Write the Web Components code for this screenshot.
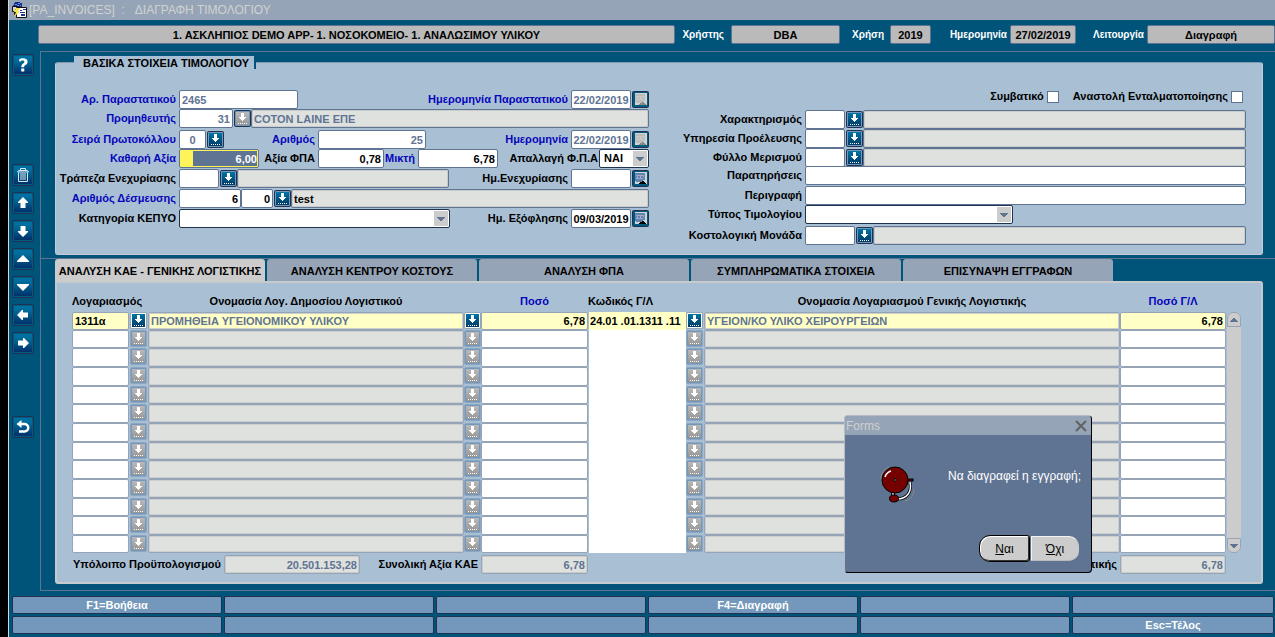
<!DOCTYPE html>
<html lang="el">
<head>
<meta charset="utf-8">
<title>[PA_INVOICES] : ΔΙΑΓΡΑΦΗ ΤΙΜΟΛΟΓΙΟΥ</title>
<style>
:root{
  --teal:#005479; --panel:#a9bfd4; --bar:#96a4b7; --steel:#5f7493; --key:#7398bb;
  --grey:#cccccc; --field-off:#dee1de; --navy:#1f3350; --blue:#0606bb; --current:#ffffc6;
}
body{margin:0;background:var(--teal);font:bold 11px/13px "Liberation Sans",Arial,sans-serif;color:#000}
</style>
</head>
<body>
<invoice-app></invoice-app>
<script>
const base = `<style>*{box-sizing:border-box}button,input,select{font:inherit;margin:0}button{padding:0;cursor:pointer}</style>`;
function define(name, html, setup){
  const t = document.createElement('template');
  t.innerHTML = base + html;
  customElements.define(name, class extends HTMLElement{
    constructor(){
      super();
      this.attachShadow({mode:'open'}).appendChild(t.content.cloneNode(true));
    }
    connectedCallback(){ if(setup && !this.ready){ this.ready = true; setup(this, this.shadowRoot); } }
  });
}

/* Labelled single-line field; the slot takes buttons that follow the input */
define('text-field', `<style>
:host{display:flex;align-items:center;height:19px;min-width:0;flex:none}
:host([grow]){flex:1}
:host([push]){margin-left:auto}
label{width:var(--lw,auto);flex:none;text-align:right;white-space:nowrap;margin-right:3px;color:#000}
label:empty{display:none}
:host([key]) label{color:var(--blue)}
:host([flush]) label{margin-right:0}
input{width:var(--w,60px);height:19px;border:1px solid var(--steel);border-radius:2px;background:#fff;padding:0 2px;color:#000;outline:0;min-width:0}
:host([grow]) input{flex:1}
:host([dim]) input{color:var(--steel)}
:host([off]) input{background:var(--field-off);box-shadow:inset 0 0 0 1px #c9cccb;border-color:var(--edge,var(--steel))}
:host([align=right]) input{text-align:right}
:host([align=center]) input{text-align:center;padding:0}
:host([current]) input{color:#fff;padding:1px 1px 1px 13px;background:linear-gradient(var(--steel),var(--steel)) content-box,#fff35a}
</style><label for="f"></label><input id="f" type="text"><slot></slot>`, (el, r) => {
  r.querySelector('label').textContent = el.getAttribute('label') || '';
  const i = r.querySelector('input');
  i.value = el.getAttribute('value') || '';
  if(!el.hasAttribute('label')) i.setAttribute('aria-label', el.getAttribute('name') || 'Περιγραφή');
  i.readOnly = el.hasAttribute('off');
});

define('status-field', `<style>
:host{display:flex;align-items:center;flex:none;min-width:0}
:host([grow]){flex:1}
label{font-size:10px;color:#fff;text-align:right;white-space:nowrap;width:var(--lw,auto);margin-right:var(--lg,6px)}
label:empty{display:none}
input{width:var(--w,60px);height:19px;min-width:0;border:1px solid var(--steel);border-radius:2px;background:#bababa;text-align:center;padding:0 2px;color:#000}
:host([grow]) input{flex:1}
</style><label for="f"></label><input id="f" type="text" readonly>`, (el, r) => {
  r.querySelector('label').textContent = el.getAttribute('label') || '';
  const i = r.querySelector('input');
  i.value = el.getAttribute('value');
  if(!el.hasAttribute('label')) i.setAttribute('aria-label','Εφαρμογή');
});

define('pick-list', `<style>
:host{display:flex;align-items:center;flex:none}
:host([push]){margin-left:auto}
label{width:var(--lw,auto);text-align:right;white-space:nowrap;margin-right:var(--lg,3px)}
.box{display:grid;width:var(--w,60px);height:19px}
select{grid-area:1/1;width:100%;height:100%;appearance:none;border:1px solid var(--navy);border-radius:2px;background:#fff;padding:0 4px;color:#000}
.arrow{grid-area:1/1;justify-self:end;align-self:center;margin-right:2px;width:14px;height:15px;background:var(--grey);pointer-events:none}
</style><label for="s"></label><div class="box"><select id="s"><option></option></select>
<svg class="arrow" viewBox="0 0 14 15"><path d="M3 6h8v1H3zM4 7h6v1H4zM5 8h4v1H5zM6 9h2v1H6z" fill="#5f7493"/></svg></div>`, (el, r) => {
  r.querySelector('label').textContent = el.getAttribute('label');
  r.querySelector('option').textContent = el.getAttribute('value') || '';
});

define('check-field', `<style>
:host{display:flex;align-items:center;flex:none}
label{margin-right:3px;white-space:nowrap}
input{appearance:none;width:12px;height:12px;border:1px solid var(--steel);background:#fff}
</style><label for="c"></label><input id="c" type="checkbox">`, (el, r) => {
  r.querySelector('label').textContent = el.getAttribute('label');
});

/* List-of-values button */
define('lov-button', `<style>
:host{display:block;width:17px;height:17px;flex:none}
button{display:block;width:17px;height:17px;border:0;background:none}
svg{display:block}
.o{fill:#1f3350}.f{fill:#7398bb}.i{fill:url(#g)}
:host([off]) .i{fill:url(#h)}
:host([grid]) .o{fill:#96a4b7}
:host([grid][on]) .f{fill:#fffff0}
:host([grid]:not([on])) .o{fill:#8ba6c2}
</style><button type="button" aria-label="Λίστα τιμών"><svg width="17" height="17" viewBox="0 0 17 17">
<defs><linearGradient id="g" x2="0" y2="1"><stop offset="0" stop-color="#0074a6"/><stop offset="1" stop-color="#003a66"/></linearGradient>
<linearGradient id="h" x2="0" y2="1"><stop offset="0" stop-color="#b9b9b9"/><stop offset="1" stop-color="#969696"/></linearGradient></defs>
<rect class="o" width="17" height="17" rx="2"/><rect class="f" x="1" y="1" width="15" height="15" rx="1"/><rect class="i" x="2" y="2" width="13" height="13"/>
<path d="M7 3h3v4h2v1h-1v1h-1v1H9v1H8v-1H7V9H6V8H5V7h2zM4 13h1v1H4zM6 13h1v1H6zM8 13h1v1H8zM10 13h1v1h-1zM12 13h1v1h-1z" fill="#fff"/></svg></button>`);

define('date-button', `<style>
:host{display:block;width:17px;height:17px;flex:none;margin-left:1px}
button{display:block;width:17px;height:17px;border:0;background:none}
svg{display:block}
.p{fill:#6382b3}.t{fill:#000}
:host([off]) .p{fill:#bdbdbd}:host([off]) .t{fill:#8b8b86}
</style><button type="button" aria-label="Ημερολόγιο"><svg width="17" height="17" viewBox="0 0 17 17">
<rect width="17" height="17" rx="2" fill="#1f3350"/><rect x="1" y="1" width="15" height="15" fill="#005b80"/><rect x="3" y="2" width="12" height="12" fill="#d2d4d2"/>
<path class="p" d="M3 3h10v7h-2v2H4v-1H3z"/><path d="M4 5h8v1H4zM4 8h7v1H4zM5 5h1v4H5zM8 5h1v4H8zM11 5h1v2h-1z" fill="#d2d4d2" opacity=".55"/>
<path class="t" d="M10 11h2v1h1v1h1v1H7v-1h1v-1h2z"/></svg></button>`);

define('tool-button', `<style>
:host{display:block;width:22px;height:22px}
button{display:block;width:22px;height:22px;border:1px solid var(--navy);border-radius:2px;background:#005b85;padding:1px}
svg{display:block;width:18px;height:18px;background:linear-gradient(#0070a0 0 15%,#005a8a 50%,#00306a)}
</style><button type="button"><svg viewBox="0 0 18 18" fill="#fff"></svg></button>`, (el, r) => {
  const icons = {
    help:['Βοήθεια','<path d="M5 3.5C6 2.7 7.3 2.3 9 2.3c2.900 0 4.600 1.300 4.600 3.400 0 1.600-.8 2.500-2.100 3.300-1 .6-1.300 1-1.300 2.200H7.300c0-2 .5-2.800 1.800-3.700 1-.6 1.300-1 1.300-1.700 0-.8-.6-1.200-1.600-1.200-1.100 0-2 .4-3.100 1.300zM7.200 12.600h3.100v3H7.200z"/>'],
    trash:['Διαγραφή','<path d="M4.500 4.500h9l1 1.500h-11zM6.500 4V2.500h5V4M4.500 6.500v9h9v-9M7 7v7M9 7v7M11 7v7" fill="none" stroke="#dce6f0"/>'],
    up:['Προηγούμενη εγγραφή','<path d="M9 3l5 5v1h-2.500v5h-5V9H4V8z"/>'],
    down:['Επόμενη εγγραφή','<path d="M9 15l5-5V9h-2.500V4h-5v5H4v1z"/>'],
    pageup:['Προηγούμενη σελίδα','<path d="M9 5l6 6v1H3v-1z"/>'],
    pagedown:['Επόμενη σελίδα','<path d="M9 13L3 7V6h12v1z"/>'],
    left:['Αριστερά','<path d="M3 9l5-5h1v2.500h5v5H9V14H8z"/>'],
    right:['Δεξιά','<path d="M15 9l-5-5H9v2.500H4v5h5V14h1z"/>'],
    back:['Επιστροφή','<path d="M5 6h5.500a3.500 3.500 0 0 1 0 7.500H5" fill="none" stroke="#fff" stroke-width="2.500"/><path d="M7.500 2v8L2.500 6z"/>']
  };
  const [n, p] = icons[el.getAttribute('icon')];
  r.querySelector('svg').innerHTML = p;
  r.querySelector('button').setAttribute('aria-label', n);
});

define('tool-rail', `<style>
:host{display:flex;flex-direction:column;width:31px;flex:none;padding:3px 0 0 3px}
nav{display:flex;flex-direction:column;gap:6px}
.edit{margin-top:88px}.exit{margin-top:62px}
</style>
<nav><tool-button icon="help"></tool-button></nav>
<nav class="edit"><tool-button icon="trash"></tool-button><tool-button icon="up"></tool-button><tool-button icon="down"></tool-button><tool-button icon="pageup"></tool-button><tool-button icon="pagedown"></tool-button><tool-button icon="left"></tool-button><tool-button icon="right"></tool-button></nav>
<nav class="exit"><tool-button icon="back"></tool-button></nav>`);

define('title-bar', `<style>
:host{display:flex;align-items:center;height:20px;background:var(--bar);font-weight:normal;font-size:12px;line-height:20px;color:#d0d2d0;padding-left:2px;gap:2px;white-space:pre}
svg{flex:none}
</style><svg width="16" height="16" viewBox="0 0 16 16"><path d="M3 1h1V0h5v1h2v4H2V3h1z" fill="#1c2a86"/><path d="M4 2h2v1H4zM7 1h2v1H7zM6 3h2v1H6zM9 3h1v1H9z" fill="#4ea0ff"/><path d="M1.500 4.500h6v3h-3v5h-1v-3h-2z" fill="#d8d8d8" stroke="#111"/><path d="M5.500 5.500h10v10h-10z" fill="#fff" stroke="#111"/><path d="M9 8h2v1H9zM12 7h3v1h-3zM9 10h5v1H9zM10 12h4v2h-4z" fill="#26338f"/><path d="M5 6h4L7 9h2l-6 6 2-5H3z" fill="#f5e642"/></svg><span>[PA_INVOICES]  :   ΔΙΑΓΡΑΦΗ ΤΙΜΟΛΟΓΙΟΥ</span>`);

define('status-header', `<style>
:host{display:flex;padding:5px 0 7px 29px}
.u{--lw:49px;--lg:7px;--w:109px}.y{--lw:44px;--w:41px}.d{--lw:76px;--lg:3px;--w:66px}.m{--lw:68px;--lg:3px;--w:128px}
</style>
<status-field grow value="1. ΑΣΚΛΗΠΙΟΣ DEMO APP- 1. ΝΟΣΟΚΟΜΕΙΟ- 1. ΑΝΑΛΩΣΙΜΟΥ ΥΛΙΚΟΥ"></status-field>
<status-field class="u" label="Χρήστης" value="DBA"></status-field>
<status-field class="y" label="Χρήση" value="2019"></status-field>
<status-field class="d" label="Ημερομηνία" value="27/02/2019"></status-field>
<status-field class="m" label="Λειτουργία" value="Διαγραφή"></status-field>`);

define('invoice-form', `<style>
:host{display:block;border:1px solid #c2cdd8;border-top-color:#8299b2;border-radius:3px;background:var(--panel);height:193px}
h2{font:inherit;line-height:15px;width:max-content;height:13px;margin:-7px 0 21px 18px;padding:0 5px 0 9px;background:var(--panel);border-right:2px solid var(--teal)}
.cols{display:flex}
.left{flex:none;width:593px;display:grid;grid-template-rows:19px 21px 19px 20px 20px 20px 20px}
.right{flex:1;min-width:0;padding-right:16px;display:grid;grid-template-rows:20px 19px 19px 18px 20px 19px 21px 19px}
.row{display:flex;align-items:flex-start;min-width:0}
.left .row>:first-child{--lw:120px}
.right .row>:first-child{--lw:153px}
.row>lov-button{margin:1px 0 0 1px}
.checks{justify-content:flex-end;gap:14px;padding:0 3px 0 0}
.w27{--w:27px}.w32{--w:32px}.w40{--w:40px}.w50{--w:50px}.w54{--w:54px}.w60{--w:60px}.w62{--w:62px}.w66{--w:66px;--lw:56px}.w80{--w:80px}.w119{--w:119px}.num{--w:108px;--lw:91px}.mix{--w:80px;--lw:31px}.bank{width:212px}.kepyo{--w:271px}.vat{--w:50px;--lg:1px}.kind{--w:208px}
</style>
<h2>ΒΑΣΙΚΑ ΣΤΟΙΧΕΙΑ ΤΙΜΟΛΟΓΙΟΥ</h2>
<div class="cols">
<div class="left">
 <div class="row"><text-field key dim class="w119" label="Αρ. Παραστατικού" value="2465"></text-field><text-field push key dim align="center" class="w60" label="Ημερομηνία Παραστατικού" value="22/02/2019"><date-button off></date-button></text-field></div>
 <div class="row"><text-field key dim align="right" class="w54" label="Προμηθευτής" value="31"></text-field><lov-button off></lov-button><text-field grow off dim name="Επωνυμία" value="COTON LAINE ΕΠΕ"></text-field></div>
 <div class="row"><text-field key dim align="center" class="w27" label="Σειρά Πρωτοκόλλου" value="0"></text-field><lov-button></lov-button><text-field key dim align="right" class="num" label="Αριθμός" value="25"></text-field><text-field push key dim align="center" class="w60" label="Ημερομηνία" value="22/02/2019"><date-button off></date-button></text-field></div>
 <div class="row"><text-field key current align="right" class="w80" label="Καθαρή Αξία" value="6,00"></text-field><text-field align="right" class="w66" label="Αξία ΦΠΑ" value="0,78"></text-field><text-field key align="right" class="mix" label="Μικτή" value="6,78"></text-field><pick-list push class="vat" label="Απαλλαγή Φ.Π.Α" value="ΝΑΙ"></pick-list></div>
 <div class="row"><text-field class="w40" label="Τράπεζα Ενεχυρίασης"></text-field><lov-button></lov-button><div class="row bank"><text-field grow off name="Τράπεζα"></text-field></div><text-field push class="w60" label="Ημ.Ενεχυρίασης"><date-button></date-button></text-field></div>
 <div class="row"><text-field key align="right" class="w62" label="Αριθμός Δέσμευσης" value="6"></text-field><text-field align="right" class="w32" name="Έτος" value="0"></text-field><lov-button></lov-button><text-field grow off name="Δέσμευση" value="test"></text-field></div>
 <div class="row"><pick-list class="kepyo" label="Κατηγορία ΚΕΠΥΟ"></pick-list><text-field push align="center" class="w60" label="Ημ. Εξόφλησης" value="09/03/2019"><date-button></date-button></text-field></div>
</div>
<div class="right">
 <div class="row checks"><check-field label="Συμβατικό"></check-field><check-field label="Αναστολή Ενταλματοποίησης"></check-field></div>
 <div class="row"><text-field class="w40" label="Χαρακτηρισμός"></text-field><lov-button></lov-button><text-field grow off></text-field></div>
 <div class="row"><text-field class="w40" label="Υπηρεσία Προέλευσης"></text-field><lov-button></lov-button><text-field grow off></text-field></div>
 <div class="row"><text-field class="w40" label="Φύλλο Μερισμού"></text-field><lov-button></lov-button><text-field grow off></text-field></div>
 <div class="row"><text-field grow label="Παρατηρήσεις"></text-field></div>
 <div class="row"><text-field grow label="Περιγραφή"></text-field></div>
 <div class="row"><pick-list class="kind" label="Τύπος Τιμολογίου"></pick-list></div>
 <div class="row"><text-field class="w50" label="Κοστολογική Μονάδα"></text-field><lov-button></lov-button><text-field grow off></text-field></div>
</div>
</div>`);

define('tab-strip', `<style>
:host{display:flex;gap:2px;height:22px}
button{width:210px;height:22px;border:0;border-radius:3px 3px 0 0;background:var(--bar);font-weight:bold;line-height:20px;padding-top:2px;color:#000;white-space:nowrap}
button[aria-selected=true]{background:var(--grey)}
</style><div role="tablist" style="display:contents">
<button role="tab" aria-selected="true">ΑΝΑΛΥΣΗ ΚΑΕ - ΓΕΝΙΚΗΣ ΛΟΓΙΣΤΙΚΗΣ</button><button role="tab">ΑΝΑΛΥΣΗ ΚΕΝΤΡΟΥ ΚΟΣΤΟΥΣ</button><button role="tab">ΑΝΑΛΥΣΗ ΦΠΑ</button><button role="tab">ΣΥΜΠΛΗΡΩΜΑΤΙΚΑ ΣΤΟΙΧΕΙΑ</button><button role="tab">ΕΠΙΣΥΝΑΨΗ ΕΓΓΡΑΦΩΝ</button></div>`);

define('account-table', `<style>
:host{display:block;min-width:0;flex:1}
table{width:100%;table-layout:fixed;border-collapse:separate;border-spacing:0}
th,td{padding:0;text-align:center;vertical-align:top;white-space:nowrap}
th{height:21px;padding-top:4px;font:inherit;line-height:13px}
th.l{text-align:left}th.k{color:var(--blue)}
tbody tr{--h:19px}
tbody tr:nth-child(3n+2),tbody tr:first-child,tbody tr:last-child{--h:18px}
td{height:var(--h)}
input{display:block;width:100%;height:var(--h);border:1px solid var(--bar);border-radius:2px;background:#fff;padding:0 2px;outline:0;color:#000}
.acc{width:57px}.nm{background:var(--field-off);box-shadow:inset 0 0 0 1px #cdcfce;color:var(--steel)}
.amt{text-align:right}
.code{width:97px;margin:0 0 0 1px;border:0;border-radius:0;padding:0 1px}
lov-button{height:var(--h);overflow:hidden}
tbody tr:first-child input{background:var(--current)}
</style><table><colgroup><col style="width:58px"><col style="width:18px"><col style="width:316px"><col style="width:17px"><col style="width:107px"><col style="width:98px"><col style="width:18px"><col><col style="width:106px"></colgroup>
<thead><tr><th class="l" colspan="2">Λογαριασμός</th><th>Ονομασία Λογ. Δημοσίου Λογιστικού</th><th></th><th class="k">Ποσό</th><th class="l">Κωδικός Γ/Λ</th><th></th><th>Ονομασία Λογαριασμού Γενικής Λογιστικής</th><th class="k">Ποσό Γ/Λ</th></tr></thead><tbody></tbody></table>`, (el, r) => {
  const first = ['1311α','ΠΡΟΜΗΘΕΙΑ ΥΓΕΙΟΝΟΜΙΚΟΥ ΥΛΙΚΟΥ','6,78','24.01 .01.1311 .11','ΥΓΕΙΟΝ/ΚΟ ΥΛΙΚΟ ΧΕΙΡΟΥΡΓΕΙΩΝ','6,78'];
  const names = ['Λογαριασμός','Ονομασία','Ποσό','Κωδικός Γ/Λ','Ονομασία Γ/Λ','Ποσό Γ/Λ'];
  const kinds = ['acc','nm','amt','code','nm','amt'];
  let out = '';
  for(let n = 0; n < 13; n++){
    const v = n ? ['','','','','',''] : first;
    const cell = c => `<td><input type="text" class="${kinds[c]}" aria-label="${names[c]} ${n + 1}" value="${v[c]}"${kinds[c] === 'nm' ? ' readonly' : ''}></td>`;
    const lov = `<td><lov-button grid ${n ? 'off' : 'on'}></lov-button></td>`;
    out += '<tr>' + cell(0) + lov + cell(1) + lov + cell(2) + cell(3) + lov + cell(4) + cell(5) + '</tr>';
  }
  r.querySelector('tbody').innerHTML = out;
});

define('scroll-rail', `<style>
:host{display:flex;flex-direction:column;justify-content:space-between;width:14px;flex:none;margin:21px 0 0 1px;background:var(--grey);border-radius:6px}
button{height:15px;border:1px solid var(--bar);background:var(--grey);border-radius:6px 6px 0 0}
button:last-child{border-radius:0 0 6px 6px}
svg{display:block;margin:auto}
</style><button type="button" aria-label="Πάνω"><svg width="8" height="4" viewBox="0 0 8 4"><path d="M3 0h2v1h1v1h1v1h1v1H0V3h1V2h1V1h1z" fill="#5f7493"/></svg></button><button type="button" aria-label="Κάτω"><svg width="8" height="4" viewBox="0 0 8 4"><path d="M3 4h2V3h1V2h1V1h1V0H0v1h1v1h1v1h1z" fill="#5f7493"/></svg></button>`);

define('analysis-panel', `<style>
:host{display:block;border:2px solid #c6cacc;border-radius:0 3px 3px 3px;background:var(--panel);padding:8px 20px 8px 0}
.grid{display:flex;padding-left:15px}
.totals{display:flex;margin-top:2px;padding-right:15px;--edge:var(--bar)}
.a{--lw:164px;--w:136px}.b{--lw:118px;--w:107px}.c{--w:106px}
</style>
<div class="grid"><account-table></account-table><scroll-rail></scroll-rail></div>
<div class="totals"><text-field off dim align="right" class="a" label="Υπόλοιπο Προϋπολογισμού" value="20.501.153,28"></text-field><text-field off dim align="right" class="b" label="Συνολική Αξία ΚΑΕ" value="6,78"></text-field><text-field push off dim align="right" class="c" label="Λογιστικής" value="6,78"></text-field></div>`);

define('function-keys', `<style>
:host{display:grid;grid-template-columns:repeat(5,210px) 1fr;gap:2px;padding:5px 1px 3px 3px}
button{height:18px;border:1px solid var(--navy);border-radius:2px;background:var(--key);color:#fff;font-weight:bold}
</style>`, (el, r) => {
  const keys = {0:'F1=Βοήθεια', 3:'F4=Διαγραφή', 11:'Esc=Τέλος'};
  for(let n = 0; n < 12; n++){
    const b = document.createElement('button');
    b.type = 'button';
    if(keys[n]) b.textContent = keys[n]; else b.setAttribute('aria-label', 'Κενό πλήκτρο');
    r.appendChild(b);
  }
});

define('alert-dialog', `<style>
:host{position:absolute;left:844px;top:415px;width:248px;height:158px;display:flex;flex-direction:column;border:1px solid #b5bcc6;border-right-color:#000;border-bottom-color:#000;border-radius:4px;background:var(--steel);font-weight:normal;font-size:12px;line-height:14px;color:#fff}
header{display:flex;justify-content:space-between;align-items:center;height:19px;background:var(--bar);color:#ced0ce;padding:0 4px 0 1px;border-radius:3px 3px 0 0;flex:none}
.x{width:12px;height:12px;border:0;background:none}
svg{display:block}
.body{display:flex;justify-content:space-between;padding:31px 10px 0 35px;flex:1}
p{margin:3px 0 0;white-space:nowrap}
footer{display:flex;justify-content:flex-end;align-items:center;padding:0 12px 10px 0;gap:1px}
footer button{width:48px;height:25px;border:1px solid #f4f4f4;border-color:#f4f4f4 var(--grey) #bbb #f4f4f4;background:var(--grey);color:#000}
footer .yes{width:51px;height:27px;border:1px solid #000;border-radius:11px 3px 3px 11px;box-shadow:inset 1px 1px #fff,inset -1px -1px #333}
.no{border-radius:0 10px 10px 0}
</style>
<header><span>Forms</span><button class="x" type="button" aria-label="Κλείσιμο"><svg width="12" height="12" viewBox="0 0 12 12"><path d="M1 1l10 10M11 1L1 11" stroke="#626262" stroke-width="2"/></svg></button></header>
<div class="body"><svg width="36" height="38" viewBox="0 0 36 38">
<path d="M1 13C1 7 4 3 9 1M34 23c0 6-3 11-9 12" fill="none" stroke="#8a8a80"/>
<path d="M13 27v4" stroke="#000" stroke-width="4"/><path d="M13 27v4" stroke="#bbb" stroke-width="2"/>
<path d="M30 16c2 10-3 17-13 17" fill="none" stroke="#000" stroke-width="3"/><path d="M30 16c2 10-3 17-13 17" fill="none" stroke="#fff" stroke-width="1.500"/>
<rect x="27" y="13" width="6" height="2" fill="#7b0000" stroke="#000"/>
<circle cx="15" cy="14" r="13" fill="#740000" stroke="#000"/><ellipse cx="14" cy="32.500" rx="4.500" ry="3.500" fill="#740000" stroke="#000"/>
<path d="M5 11c1-3 3-5 6-6" fill="none" stroke="#fff" stroke-width="1.500"/><circle cx="15" cy="14" r="1.300" fill="#999" stroke="#000"/></svg>
<p>Να διαγραφεί η εγγραφή;</p></div>
<footer><button class="yes" type="button"><u>Ν</u>αι</button><button class="no" type="button"><u>Ό</u>χι</button></footer>`);

define('invoice-app', `<style>
:host{display:block;border-left:8px solid #000;position:relative}
.app{border-left:1px solid #d5d9dc;min-height:100vh}
.work{display:flex}
main{flex:1;min-width:0}
section{border:1px solid var(--steel);border-width:1px 0 0 1px;padding:10px 12px 3px 14px}
section+section{padding:0 12px 6px 14px;border-bottom-width:1px}
alert-dialog{margin-left:-8px}
</style><div class="app"><title-bar></title-bar><status-header></status-header>
<div class="work"><tool-rail></tool-rail><main><section><invoice-form></invoice-form></section><section><tab-strip></tab-strip><analysis-panel></analysis-panel></section></main></div>
<function-keys></function-keys></div><alert-dialog></alert-dialog>`);
</script>
</body>
</html>
